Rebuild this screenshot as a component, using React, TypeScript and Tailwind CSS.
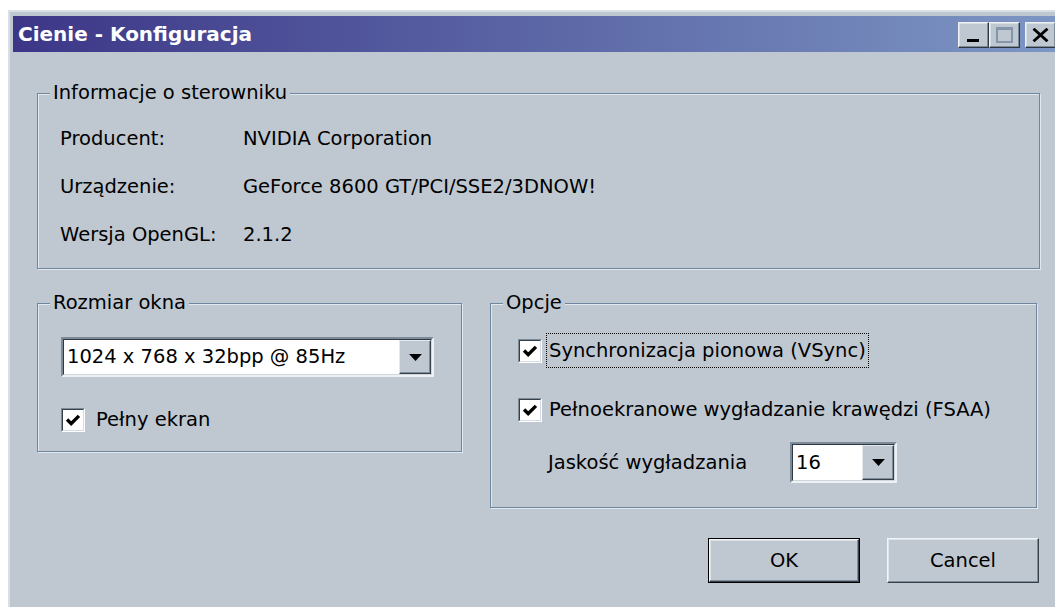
import type { ReactNode } from 'react';

// etched group box with its caption sitting on the top edge
function Group({ title, className, children }: { title: string; className: string; children: ReactNode }) {
  return (
    <div className={`relative border border-[#6f879e] shadow-[inset_1px_1px_0_#e2e8ed,1px_1px_0_#e2e8ed] ${className}`}>
      <span className="absolute left-[12px] top-[-12px] bg-[#bfc8d0] px-[3px] leading-[22px]">{title}</span>
      {children}
    </div>
  );
}

function CheckBox() {
  return (
    <span className="flex h-[24px] w-[24px] shrink-0 border border-t-[#7d8b99] border-l-[#7d8b99] border-b-white border-r-white">
      <span className="flex flex-1 items-center justify-center border border-t-[#36404a] border-l-[#36404a] border-b-[#d5dce1] border-r-[#d5dce1] bg-white">
        <svg viewBox="0 0 14 14" className="h-[16px] w-[16px]">
          <path d="M1.8 6.6 L5.4 10.2 L12.2 3.4" fill="none" stroke="black" strokeWidth="3" />
        </svg>
      </span>
    </span>
  );
}

function DropButton() {
  return (
    <span className="flex w-[32px] items-center justify-center border border-t-[#e3e8ec] border-l-[#e3e8ec] border-b-[#36404a] border-r-[#36404a] bg-[#bfc8d0] shadow-[inset_-1px_-1px_0_#7f8c99]">
      <svg viewBox="0 0 11 6" className="h-[7px] w-[13px]">
        <path d="M0 0h11L5.5 6z" fill="black" />
      </svg>
    </span>
  );
}

function Combo({ value, className }: { value: string; className: string }) {
  return (
    <div className={`flex border-2 border-t-[#7d8a97] border-l-[#7d8a97] border-b-[#eef1f4] border-r-[#eef1f4] ${className}`}>
      <div className="flex flex-1 border border-t-[#2f3943] border-l-[#2f3943] border-b-[#cfd6dc] border-r-[#cfd6dc] bg-white">
        <span className="flex flex-1 items-center pl-[3px]">{value}</span>
        <DropButton />
      </div>
    </div>
  );
}

function TitleButton({ children }: { children: ReactNode }) {
  return (
    <span className="flex h-[26px] w-[31px] border border-t-[#eef1f4] border-l-[#eef1f4] border-b-[#2e3740] border-r-[#2e3740] bg-[#bfc8d0] shadow-[inset_-1px_-1px_0_#7d8a97,inset_1px_1px_0_#d8dfe4]">
      {children}
    </span>
  );
}

function PushButton({ label, isDefault }: { label: string; isDefault?: boolean }) {
  return (
    <button
      className={`flex h-[45px] w-[152px] ${isDefault ? 'border border-black' : ''}`}
    >
      <span className="flex flex-1 items-center justify-center border border-t-[#f2f5f7] border-l-[#f2f5f7] border-b-[#36404a] border-r-[#36404a] shadow-[inset_-1px_-1px_0_#7f8c99,inset_1px_1px_0_#dde3e8]">
        {label}
      </span>
    </button>
  );
}

export default function App() {
  return (
    <div className="h-[607px] w-[1055px] overflow-hidden bg-white font-['DejaVu_Sans',sans-serif] text-[19.5px] text-black">
      <div className="ml-[8px] mt-[10px] h-[600px] w-[1062px] border-l-2 border-t-2 border-[#d8dfe5] bg-[#bfc8d0] pl-[3px] pr-[3px] pt-[4px]">
        {/* caption bar */}
        <div className="flex h-[36px] items-center bg-linear-to-r from-[#3d3687] to-[#7e97c4] pl-[5px] pr-[11px]">
          <span className="text-[20px] font-bold text-white">Cienie - Konfiguracja</span>
          <div className="ml-auto mt-[2px] flex">
            <TitleButton>
              <span className="ml-[8px] mt-[16px] h-[3px] w-[12px] bg-black" />
            </TitleButton>
            <TitleButton>
              <span className="ml-[6px] mt-[4px] h-[16px] w-[17px] border-2 border-t-[3px] border-[#8596ab]" />
            </TitleButton>
            <span className="w-[5px]" />
            <TitleButton>
              <svg viewBox="0 0 12 10" className="ml-[6px] mt-[5px] h-[14px] w-[17px]">
                <path d="M1 0.5 L11 9.5 M11 0.5 L1 9.5" stroke="black" strokeWidth="2" />
              </svg>
            </TitleButton>
          </div>
        </div>

        <div className="pl-[24px]">
          <Group title="Informacje o sterowniku" className="mt-[41px] h-[176px] w-[1003px] pl-[22px] pt-[33px]">
            <div className="flex flex-col gap-[24px] leading-[24px]">
              <div className="flex">
                <span className="w-[183px]">Producent:</span>
                <span>NVIDIA Corporation</span>
              </div>
              <div className="flex">
                <span className="w-[183px]">Urządzenie:</span>
                <span>GeForce 8600 GT/PCI/SSE2/3DNOW!</span>
              </div>
              <div className="flex">
                <span className="w-[183px]">Wersja OpenGL:</span>
                <span>2.1.2</span>
              </div>
            </div>
          </Group>

          <div className="mt-[34px] flex items-start gap-[28px]">
            <Group title="Rozmiar okna" className="h-[149px] w-[425px] pl-[23px] pt-[33px]">
              <Combo value="1024 x 768 x 32bpp @ 85Hz" className="h-[40px] w-[373px]" />
              <label className="mt-[31px] flex items-center gap-[11px] leading-[24px]">
                <CheckBox />
                <span>Pełny ekran</span>
              </label>
            </Group>

            <Group title="Opcje" className="h-[205px] w-[547px] pl-[27px] pt-[29px]">
              <label className="flex h-[35px] items-center gap-[4px]">
                <CheckBox />
                <span className="flex h-[35px] items-center border border-dotted border-black px-[2px]">
                  Synchronizacja pionowa (VSync)
                </span>
              </label>
              <label className="mt-[24px] flex h-[35px] items-center gap-[4px]">
                <CheckBox />
                <span className="px-[3px]">Pełnoekranowe wygładzanie krawędzi (FSAA)</span>
              </label>
              <div className="mt-[15px] flex items-center pl-[30px]">
                <span className="w-[242px]">Jaskość wygładzania</span>
                <Combo value="16" className="h-[41px] w-[107px]" />
              </div>
            </Group>
          </div>

          <div className="mt-[30px] flex w-[1003px] justify-end gap-[27px] pr-[1px]">
            <PushButton label="OK" isDefault />
            <PushButton label="Cancel" />
          </div>
        </div>
      </div>
    </div>
  );
}
